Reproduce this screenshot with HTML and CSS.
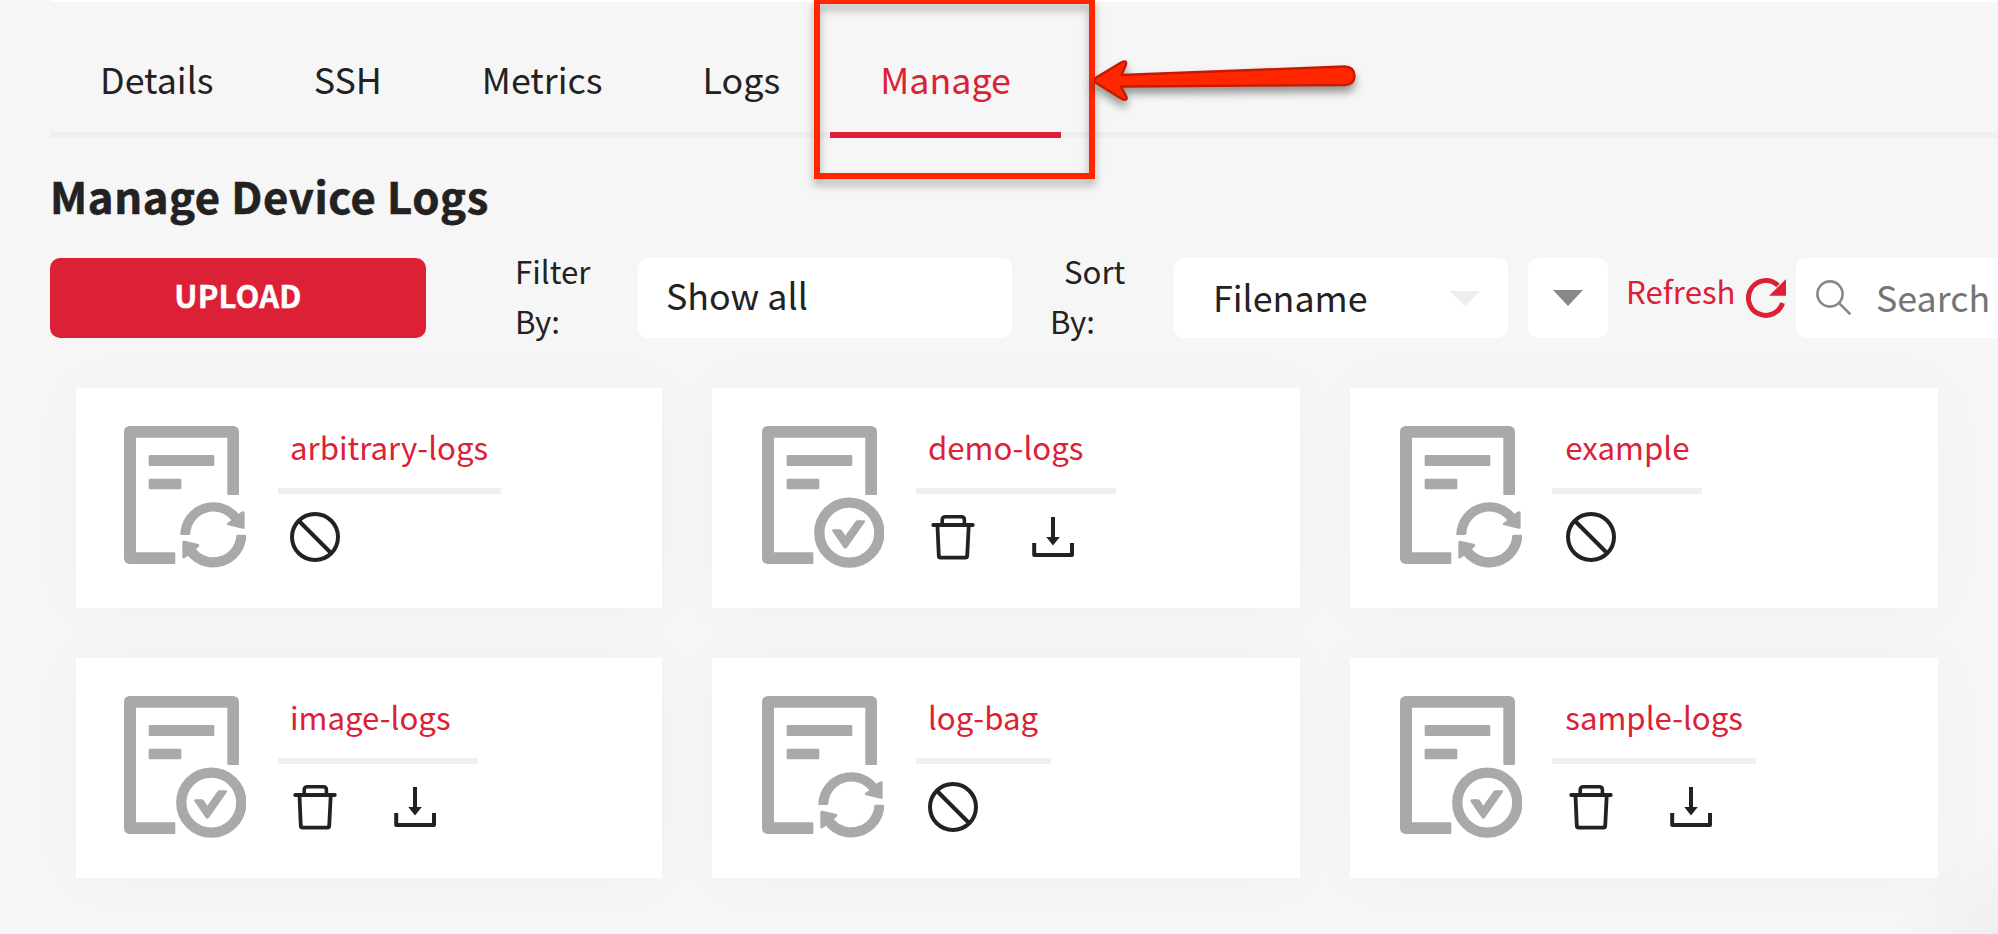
FILE: index.html
```
<!DOCTYPE html>
<html lang="en">
<head>
<meta charset="utf-8">
<title>Manage Device Logs</title>
<link rel="stylesheet" href="styles.css">
</head>
<body>
<svg class="defs" width="0" height="0" aria-hidden="true">
  <symbol id="doc" viewBox="0 0 367 426">
    <path fill="#a9a9a9" d="M16 0H329Q345 2 345 18V204Q345 207 342 207H313Q310 207 310 204V35H36V379H151Q154 379 154 382V411Q154 414 151 414H16Q0 412 0 396V18Q0 2 16 0Z"/>
    <rect x="74" y="87" width="197" height="33" rx="4" fill="#a9a9a9"/>
    <rect x="74" y="158" width="98" height="32" rx="4" fill="#a9a9a9"/>
  </symbol>
  <symbol id="sync" viewBox="0 0 367 426">
    <use href="#doc" width="367" height="426"/>
    <path fill="#a9a9a9" d="M169 323A99 99 0 0 1 343 263L356 256Q362 254 362 260V305Q362 310 356 308L313 298Q306 296 310 291L322 283A69 69 0 0 0 199 323Q198 327 195 327H172Q168 327 169 323Z"/>
    <path fill="#a9a9a9" d="M367 330A99 99 0 0 1 192 389L181 397Q175 399 175 393V350Q175 343 181 344L221 353Q229 356 225 361L216 370A69 69 0 0 0 337 330Q337 326 341 326H363Q367 326 367 330Z"/>
  </symbol>
  <symbol id="done" viewBox="0 0 367 426">
    <use href="#doc" width="367" height="426"/>
    <circle cx="262" cy="320" r="90" fill="none" stroke="#a9a9a9" stroke-width="31"/>
    <path fill="#a9a9a9" d="M214 310H233Q239 310 241 315L250 329L279 288Q282 283 287 283H306Q311 283 309 288L255 365Q250 371 245 365L211 316Q209 311 214 310Z"/>
  </symbol>
  <symbol id="ban" viewBox="0 0 50 50">
    <g fill="none" stroke="#222" stroke-width="4"><circle cx="25" cy="25" r="23"/><path d="M9 9L41 41"/></g>
  </symbol>
  <symbol id="trash" viewBox="0 0 50 50">
    <g fill="none" stroke="#222" stroke-linecap="round" stroke-linejoin="round">
      <path stroke-width="3.8" d="M5.2 13H44.8"/>
      <path stroke-width="3.6" d="M14.2 12V8Q14.2 4.8 17.4 4.8H33.2Q36.4 4.8 36.4 8V12"/>
      <path stroke-width="3.8" d="M9.5 14L10.8 44Q11 45.6 12.6 45.6H37.4Q39 45.6 39.2 44L40.7 14"/>
    </g>
  </symbol>
  <symbol id="download" viewBox="0 0 50 50">
    <path fill="none" stroke="#222" stroke-width="4" stroke-linejoin="round" d="M6.2 31V43H44V31M25 5V27"/>
    <path fill="#222" d="M18.3 25H31.8L25 33.6Z"/>
  </symbol>
</svg>

<main class="page">
  <nav class="tabs">
    <a class="tab">Details</a>
    <a class="tab">SSH</a>
    <a class="tab">Metrics</a>
    <a class="tab">Logs</a>
    <a class="tab tab-active">Manage</a>
  </nav>

  <h1 class="title">Manage Device Logs</h1>

  <section class="toolbar">
    <button class="upload">UPLOAD</button>
    <div class="label label-filter">Filter<br>By:</div>
    <div class="field field-filter">Show all</div>
    <div class="label label-sort"><span class="sort-word">Sort</span><br>By:</div>
    <div class="field field-sort"><span class="sort-value">Filename</span>
      <svg class="caret" width="30" height="15" viewBox="0 0 30 15"><path fill="#eee" d="M0 0H30L15 15Z"/></svg>
    </div>
    <div class="field field-order">
      <svg width="30" height="16" viewBox="0 0 30 16"><path fill="#888" d="M0 0H30L15 16Z"/></svg>
    </div>
    <a class="refresh">Refresh</a>
    <svg class="refresh-icon" width="40" height="40" viewBox="0 0 40 40">
      <path fill="none" stroke="#dc2136" stroke-width="5" d="M36.5 25A17.4 17.4 0 1 1 32 7.5"/>
      <path fill="#dc2136" d="M40 1V17.8H23Z"/>
    </svg>
    <div class="field field-search">
      <svg width="36" height="36" viewBox="0 0 36 36"><g fill="none" stroke="#888" stroke-width="2.6"><circle cx="14" cy="14" r="12.6"/><path d="M22.6 22.6L34.4 34.4"/></g></svg>
      <span class="placeholder">Search</span>
    </div>
  </section>

  <section class="cards">
    <article class="card card-first">
      <svg class="status"><use href="#sync"/></svg>
      <div class="info"><a class="name">arbitrary-logs</a><div class="actions"><svg><use href="#ban"/></svg></div></div>
    </article>
    <article class="card">
      <svg class="status"><use href="#done"/></svg>
      <div class="info"><a class="name">demo-logs</a><div class="actions"><svg><use href="#trash"/></svg><svg><use href="#download"/></svg></div></div>
    </article>
    <article class="card card-last">
      <svg class="status"><use href="#sync"/></svg>
      <div class="info"><a class="name">example</a><div class="actions"><svg><use href="#ban"/></svg></div></div>
    </article>
    <article class="card card-first">
      <svg class="status"><use href="#done"/></svg>
      <div class="info"><a class="name">image-logs</a><div class="actions"><svg><use href="#trash"/></svg><svg><use href="#download"/></svg></div></div>
    </article>
    <article class="card">
      <svg class="status"><use href="#sync"/></svg>
      <div class="info"><a class="name">log-bag</a><div class="actions"><svg><use href="#ban"/></svg></div></div>
    </article>
    <article class="card card-last">
      <svg class="status"><use href="#done"/></svg>
      <div class="info"><a class="name">sample-logs</a><div class="actions"><svg><use href="#trash"/></svg><svg><use href="#download"/></svg></div></div>
    </article>
  </section>
</main>

<div class="callout-box"></div>
<svg class="callout-arrow" width="300" height="90" viewBox="1080 50 300 90">
  <path fill="#ff2600" stroke="#c41a00" stroke-width="2.4" stroke-linejoin="round" d="M1094.5 80.5Q1094.5 79 1097 77L1122 62Q1127 60 1126 64.5L1121.5 75L1345 66.5Q1354.5 67 1354.5 76Q1354.5 84.5 1345 85L1121 86.5L1126.5 97Q1127.5 101.5 1122 99L1097 83.5Q1094.5 82 1094.5 80.5Z"/>
</svg>
</body>
</html>
```
FILE: styles.css
```
* { box-sizing: border-box; }

body {
  margin: 0;
  width: 1998px;
  height: 934px;
  overflow: hidden;
  position: relative;
  background: radial-gradient(circle at 100% 100%, #efefef, #f6f6f6 100px);
  color: #222;
  font-family: "Noto Sans CJK SC", "Noto Sans", sans-serif;
  font-size: 31.2px;
}

.defs { position: absolute; }

.page { padding-left: 50px; }

.tabs {
  display: flex;
  height: 138px;
  padding-top: 20px;
  border-top: 2px solid #fff;
  box-shadow: inset 0 -6px #efefef;
}
.tab {
  height: 116px;
  padding: 0 50px;
  border-bottom: 6px solid transparent;
  font-size: 35.8px;
  line-height: 112px;
}
.tab-active { color: #dc2136; border-color: #dc2136; }

.title {
  margin: 0;
  height: 120px;
  font-size: 43.6px;
  font-weight: 700;
  letter-spacing: .6px;
  line-height: 115px;
  -webkit-text-stroke: .6px #222;
}

.toolbar {
  display: flex;
  height: 80px;
  white-space: nowrap;
}
.toolbar > * { flex: none; }
.upload {
  width: 376px;
  padding: 0 0 6px;
  border: 0;
  border-radius: 10px;
  background: #dc2136;
  color: #fff;
  font: 700 31px/74px "Noto Sans CJK SC", sans-serif;
  letter-spacing: .2px;
  -webkit-text-stroke: .4px #fff;
}
.label { line-height: 50px; margin-top: -12px; }
.label-filter { width: 123px; margin-left: 89px; }
.label-sort { width: 124px; margin-left: 38px; }
.sort-word { margin-left: 14px; }
.field {
  display: flex;
  align-items: center;
  height: 80px;
  border-radius: 10px;
  background: #fff;
  font-size: 35.8px;
}
.field-filter { width: 374px; padding: 0 0 8px 28px; }
.field-sort { width: 334px; padding: 0 28px 0 39px; justify-content: space-between; }
.sort-value, .placeholder { padding-bottom: 4px; }
.field-order { width: 80px; margin-left: 20px; justify-content: center; }
.refresh { width: 120px; margin-left: 18px; color: #dc2136; line-height: 66px; }
.refresh-icon { margin: 20px 10px 0 0; }
.field-search {
  width: 202px;
  padding-left: 20px;
  gap: 24px;
  border-radius: 10px 0 0 10px;
  color: #757575;
}

.cards {
  display: grid;
  grid-template-columns: 586px 588px 588px;
  grid-auto-rows: 220px;
  gap: 50px;
  padding: 50px 0 0 26px;
}
.card {
  display: flex;
  padding: 38px 0 0 50px;
  background: #fff;
  box-shadow: 0 0 60px rgba(0, 0, 0, .027);
}
.card-first { padding-left: 48px; }
.card-last { padding-left: 49.5px; }
.status { flex: none; width: 122.3px; height: 142px; margin-right: 31.7px; }
.card-last .status { margin-right: 30.5px; }
.name {
  display: block;
  height: 68px;
  padding: 0 13px 0 12px;
  border-bottom: 6px solid #efefef;
  color: #dc2136;
  line-height: 41px;
}
.card-last .name { padding-left: 13px; }
.actions {
  display: flex;
  padding-top: 18px;
}
.actions svg { width: 50px; height: 50px; margin: 0 38px 0 12px; }
.card-last .actions { padding-left: 1.5px; }

.callout-box {
  position: absolute;
  left: 814px;
  top: -2px;
  width: 281px;
  height: 180.5px;
  border: 6px solid #ff2600;
  filter: drop-shadow(0 6px 4px rgba(0, 0, 0, .3));
}
.callout-arrow {
  position: absolute;
  left: 1080px;
  top: 50px;
  filter: drop-shadow(0 6px 4px rgba(0, 0, 0, .4));
}
```
